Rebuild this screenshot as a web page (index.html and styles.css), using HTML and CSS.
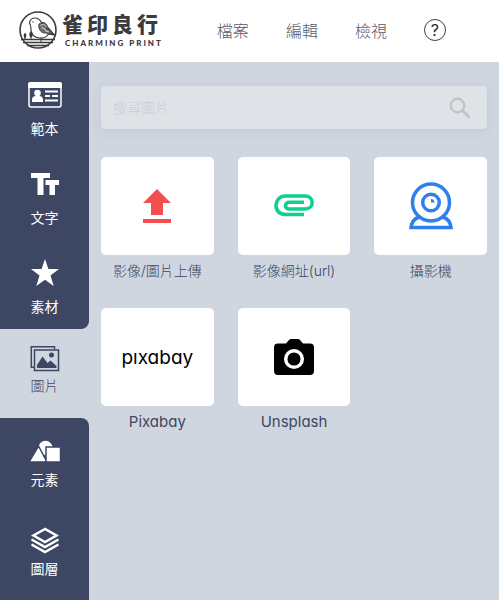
FILE: index.html
```html
<!DOCTYPE html>
<html lang="zh-Hant">
<head>
<meta charset="utf-8">
<meta name="viewport" content="width=device-width, initial-scale=1">
<title>雀印良行</title>
<link rel="stylesheet" href="styles.css">
</head>
<body>
<header class="topbar">
  <a class="brand" href="#">
    <svg class="brand-mark" viewBox="0 0 38 38" fill="none" stroke="#3c3a3b" aria-hidden="true">
      <circle cx="19" cy="19" r="18" stroke-width="1.600"/>
      <path d="M10.500 12C11 8.500 13 7 16 7c4 0 5.500 2.500 7 5 2 3 5 4.500 7 6.500l5.500 5.500-6-1c-2 3-5.500 4.500-9 4-5-.5-8-3.500-8.500-7.500-.3-3 .5-4-1.500-7.500z" stroke-width="1.200"/>
      <path d="M20 13c3.500-3 7.500-1.500 8.500 2.500l6.500 8-9-1.500c-4 .5-7.500-5-6-9z" fill="#3c3a3b" fill-opacity=".75" stroke-width=".8"/>
      <path d="M21.500 14.500c3-2 5-.5 5.500 2M22.500 17c2-.5 3 .5 3.500 2M26 19.500l4 1.500" stroke="#fff" stroke-width=".8"/>
      <circle cx="14" cy="11" r=".7" fill="#3c3a3b" stroke="none"/>
      <path d="M2 28.500h34M4 31.500h30M8 34.500h22" stroke-width="1.500"/>
      <path d="M6 28v-5M12 28v-6M22 27v4" stroke-width="1"/>
      <ellipse cx="6" cy="24.500" rx="1.300" ry="2.500" fill="#3c3a3b" stroke="none"/>
      <ellipse cx="12" cy="23.500" rx="1.600" ry="3" fill="#3c3a3b" stroke="none"/>
    </svg>
    <span class="brand-text">
      <span class="brand-name">雀印良行</span>
      <span class="brand-sub">CHARMING PRINT</span>
    </span>
  </a>
  <nav class="menu">
    <button type="button">檔案</button>
    <button type="button">編輯</button>
    <button type="button">檢視</button>
    <button type="button" class="help">?</button>
  </nav>
</header>
<div class="workspace">
  <nav class="sidebar">
    <div class="group group-top">
      <button type="button" class="tab">
        <svg viewBox="0 0 36 30" aria-hidden="true">
          <rect x="2" y="3" width="32" height="24" rx="2" fill="none" stroke="#fff" stroke-width="1.500"/>
          <path d="M1 8V4q0-2 2-2h30q2 0 2 2v4z" fill="#fff"/>
          <circle cx="10.500" cy="13" r="3.300" fill="#fff"/>
          <path d="M5 22v-2q0-4 4-4h3q4 0 4 4v2z" fill="#fff"/>
          <path d="M18 11.500h13M18 16h5M25 16h6M18 20.500h13" stroke="#fff" stroke-width="2"/>
        </svg>
        <span>範本</span>
      </button>
      <button type="button" class="tab">
        <svg viewBox="0 0 36 30" fill="#fff" aria-hidden="true">
          <path d="M4 4h19v5h-6.500v17h-6V9H4zM18.500 11H32v5h-4v10h-5.500V16h-4z"/>
        </svg>
        <span>文字</span>
      </button>
      <button type="button" class="tab">
        <svg viewBox="0 0 36 30" fill="#fff" aria-hidden="true">
          <path d="M18 1l3.400 10H32l-8.500 6.500L26.700 28 18 21.700 9.300 28l3.200-10.500L4 11h10.600z"/>
        </svg>
        <span>素材</span>
      </button>
    </div>
    <button type="button" class="tab tab-active" aria-current="page">
      <svg viewBox="0 0 36 30" fill="none" stroke="#3d4663" stroke-width="1.500" aria-hidden="true">
        <path d="M27.500 5.500V2.800H4.300v20.500H7"/>
        <rect x="7.500" y="6" width="24" height="20.500"/>
        <path d="M10 24v-3l5.500-8.500 5 6.500 3-2.500 6 5.500v2z" fill="#3d4663" stroke="none"/>
        <circle cx="24.500" cy="11" r="2.500" fill="#3d4663" stroke="none"/>
      </svg>
      <span>圖片</span>
    </button>
    <div class="group group-bottom">
      <button type="button" class="tab">
        <svg viewBox="0 0 36 30" fill="#fff" aria-hidden="true">
          <circle cx="18.500" cy="12" r="7.200"/>
          <path d="M11.500 10L2 26h18z" stroke="#3d4663" stroke-width="1.500"/>
          <rect x="19" y="11" width="14.500" height="15" stroke="#3d4663" stroke-width="1.500"/>
        </svg>
        <span>元素</span>
      </button>
      <button type="button" class="tab">
        <svg viewBox="0 0 36 30" fill="none" stroke="#fff" stroke-width="2.500" aria-hidden="true">
          <path d="M18 4L6.500 10.500 18 17l11.500-6.500zM4.500 14.500L18 22l13.500-7.500M4.500 19.500L18 27l13.500-7.500"/>
        </svg>
        <span>圖層</span>
      </button>
    </div>
  </nav>
  <main class="panel">
    <form class="search">
      <input type="search" placeholder="搜尋圖片" aria-label="搜尋圖片">
      <button type="button" aria-label="搜尋">
        <svg viewBox="0 0 22 22" fill="none" stroke="#bfc2c6" aria-hidden="true">
          <circle cx="8.500" cy="8.500" r="6.800" stroke-width="2.200"/>
          <path d="M13.500 13.500l7 7" stroke-width="2.800"/>
        </svg>
      </button>
    </form>
    <div class="sources">
      <button type="button" class="source">
        <span class="tile">
          <svg width="28" height="34" viewBox="0 0 28 34" fill="#f44f4f" aria-hidden="true">
            <path d="M14 0l14 14h-8v12H8V14H0zM0 30h28v4H0z"/>
          </svg>
        </span>
        <span class="caption">影像/圖片上傳</span>
      </button>
      <button type="button" class="source">
        <span class="tile">
          <svg width="40" height="24" viewBox="0 0 40 24" fill="none" stroke="#0fd08c" stroke-width="3.600" aria-hidden="true">
            <path d="M30 20.500H11.500C5.500 20.500 2 16.500 2 11.500S5.500 2 11.500 2H31c4.500 0 7.200 3 7.200 6.500S35.500 15 31 15H15.500c-2.500 0-4-1.500-4-3.300s1.500-3.400 4-3.400H30"/>
          </svg>
        </span>
        <span class="caption">影像網址(url)</span>
      </button>
      <button type="button" class="source">
        <span class="tile">
          <svg width="44" height="48" viewBox="0 0 44 48" fill="none" stroke="#2f80ed" stroke-width="3.500" aria-hidden="true">
            <circle cx="22" cy="20.500" r="18.500"/>
            <circle cx="22" cy="20.500" r="8.300"/>
            <path d="M22 20.500v-3.500a3.500 3.500 0 0 1 3.500 3.500z" fill="#2f80ed" stroke="none"/>
            <path d="M10 35C4.500 37 2.500 41 2 45.500h40c-.5-4.500-2.500-8.500-8-10.500"/>
          </svg>
        </span>
        <span class="caption">攝影機</span>
      </button>
      <button type="button" class="source">
        <span class="tile"><span class="pixabay">pıxabay</span></span>
        <span class="caption caption-latin">Pixabay</span>
      </button>
      <button type="button" class="source">
        <span class="tile">
          <svg width="40" height="36" viewBox="0 0 40 36" aria-hidden="true">
            <path d="M4 4.500h8L15 1q1-1 2-1h7q1 0 2 1l3 3.500h7q4 0 4 4V32q0 4-4 4H4q-4 0-4-4V8.500q0-4 4-4z"/>
            <circle cx="20" cy="20" r="8.300" fill="none" stroke="#fff" stroke-width="3.500"/>
          </svg>
        </span>
        <span class="caption caption-latin">Unsplash</span>
      </button>
    </div>
  </main>
</div>
</body>
</html>
```
FILE: styles.css
```css
* { box-sizing: border-box; }

body {
  display: flex;
  flex-direction: column;
  min-height: 100vh;
  margin: 0;
  background: #fff;
  color: #3d4663;
  font-family: Inter, "Noto Sans CJK TC", sans-serif;
  font-size: 14px;
  font-weight: 300;
  font-feature-settings: "cv11";
}

button {
  padding: 0;
  border: 0;
  background: none;
  color: inherit;
  font: inherit;
  font-feature-settings: inherit;
  cursor: pointer;
}

.topbar {
  display: flex;
  align-items: center;
  gap: 54px;
  height: 62px;
  padding: 0 19px 3px;
  background: #fff;
}

.brand {
  display: flex;
  align-items: center;
  gap: 5px;
  color: #3c3a3b;
  text-decoration: none;
  white-space: nowrap;
}

.brand-mark { width: 38px; height: 38px; }

.brand-text { display: flex; flex-direction: column; }

.brand-name {
  font-size: 21px;
  font-weight: 900;
  line-height: 26px;
  letter-spacing: 4px;
}

.brand-sub {
  padding-left: 3px;
  font-family: Lato, sans-serif;
  font-size: 8px;
  font-weight: 900;
  line-height: 10px;
  letter-spacing: 2px;
}

.menu {
  display: flex;
  align-items: center;
  gap: 37px;
  font-size: 16px;
  color: #555a6b;
  white-space: nowrap;
}

.menu .help {
  width: 22px;
  height: 22px;
  border: 1px solid #3c3f4a;
  border-radius: 50%;
  color: #24262e;
  font-weight: 400;
  line-height: 20px;
}

.workspace {
  display: flex;
  flex: 1;
  padding-right: 2px;
}

.sidebar {
  display: flex;
  flex-direction: column;
  width: 89px;
  background: #d0d6e0;
}

.group { background: #3d4663; color: #fff; }
.group-top { border-radius: 0 0 8px 0; }
.group-bottom { flex: 1; border-radius: 0 8px 0 0; }

.tab {
  display: flex;
  flex-direction: column;
  align-items: center;
  gap: 9px;
  width: 100%;
  height: 89px;
  padding-top: 18px;
  font-weight: 400;
  line-height: 20px;
}

.tab svg { width: 36px; height: 30px; }
.group-bottom .tab { gap: 4px; }

.tab-active {
  gap: 2px;
  padding-top: 15px;
  font-weight: 300;
}

.panel {
  flex: 1;
  padding: 24px 12px;
  background: #d0d6e0;
}

.search {
  display: flex;
  align-items: center;
  height: 43px;
  margin-bottom: 28px;
  padding: 0 16px 0 12px;
  border-radius: 4px;
  background: #dfe3e8;
  box-shadow: 0 2px 10px rgba(120, 140, 180, 0.18);
}

.search input {
  flex: 1;
  min-width: 0;
  padding: 0;
  border: 0;
  outline: 0;
  background: none;
  font: inherit;
}

.search input::placeholder { color: #c9ced5; opacity: 1; }
.search svg { display: block; width: 22px; height: 22px; }

.sources {
  display: grid;
  grid-template-columns: repeat(3, 1fr);
  gap: 21px 24px;
}

.source { display: flex; flex-direction: column; }

.tile {
  display: flex;
  align-items: center;
  justify-content: center;
  width: 100%;
  height: 98px;
  border-radius: 5px;
  background: #fff;
}

.caption {
  width: 100%;
  line-height: 32px;
  text-align: center;
  white-space: nowrap;
}

.caption-latin { font-size: 15px; font-weight: 400; }

.pixabay {
  color: #000;
  font-size: 19px;
  font-weight: 400;
}
```
